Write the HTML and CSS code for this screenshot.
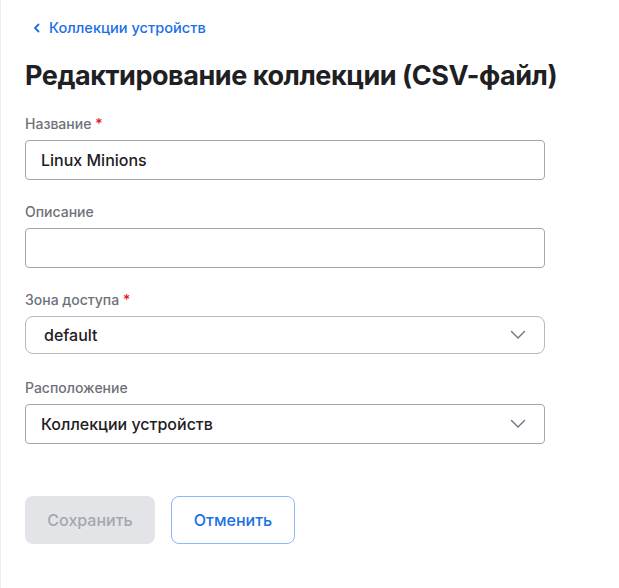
FILE: index.html
```html
<!DOCTYPE html>
<html lang="ru">
<head>
<meta charset="utf-8">
<link rel="stylesheet" href="styles.css">
</head>
<body>
<div class="page">
  <a class="back" href="#">
    <svg class="back-icon" width="8" height="10" viewBox="0 0 8 10"><path d="M5.5 1.5 L2 5 L5.5 8.5" fill="none" stroke="#1a6fe8" stroke-width="1.8" stroke-linecap="round" stroke-linejoin="round"/></svg>
    <span>Коллекции устройств</span>
  </a>
  <h1 class="title">Редактирование коллекции (CSV-файл)</h1>

  <div class="field first">
    <div class="label">Название <span class="req">*</span></div>
    <div class="input">Linux Minions</div>
  </div>
  <div class="field">
    <div class="label">Описание</div>
    <div class="input"></div>
  </div>
  <div class="field">
    <div class="label">Зона доступа <span class="req">*</span></div>
    <div class="input select round">
      <span>default</span>
      <svg class="chev" width="16" height="10" viewBox="0 0 16 10"><path d="M1.5 1.5 L8 8 L14.5 1.5" fill="none" stroke="#6b7280" stroke-width="1.4" stroke-linecap="round" stroke-linejoin="round"/></svg>
    </div>
  </div>
  <div class="field after-round">
    <div class="label">Расположение</div>
    <div class="input select">
      <span>Коллекции устройств</span>
      <svg class="chev" width="16" height="10" viewBox="0 0 16 10"><path d="M1.5 1.5 L8 8 L14.5 1.5" fill="none" stroke="#6b7280" stroke-width="1.4" stroke-linecap="round" stroke-linejoin="round"/></svg>
    </div>
  </div>

  <div class="actions">
    <button class="btn btn-save" disabled>Сохранить</button>
    <button class="btn btn-cancel">Отменить</button>
  </div>
</div>
</body>
</html>
```
FILE: styles.css
```css
html, body {
  margin: 0;
  padding: 0;
  background: #ffffff;
}
body {
  font-family: Inter, "Noto Sans", sans-serif;
  color: #1f2023;
}
.page {
  min-height: 588px;
  box-sizing: border-box;
  border-left: 1px solid #eeeff1;
  padding: 16px 0 0 24px;
}
.back {
  display: flex;
  align-items: center;
  gap: 8px;
  height: 24px;
  padding-left: 8px;
  color: #1a6fe8;
  text-decoration: none;
  font-size: 14.6px;
  font-weight: 500;
}
.back-icon { display: block; }
.title {
  margin: 18px 0 0 0;
  font-size: 27px;
  line-height: 36px;
  font-weight: 700;
  color: #1f2023;
  letter-spacing: -0.45px;
}
.field {
  width: 520px;
  margin-top: 22px;
}
.field.first { margin-top: 20px; }
.field.after-round { margin-top: 24px; }
.label {
  font-size: 14px;
  line-height: 20px;
  color: #6e7178;
  font-weight: 500;
  margin-bottom: 6px;
}
.req { color: #e01b24; }
.input {
  box-sizing: border-box;
  height: 40px;
  border: 1px solid #a3a7b0;
  border-radius: 4px;
  display: flex;
  align-items: center;
  padding: 0 15px;
  font-size: 16px;
  font-weight: 500;
  color: #1f2023;
}
.select { justify-content: space-between; padding-right: 18px; }
.round {
  height: 38px;
  border-radius: 8px;
  border-color: #b4b8c0;
  padding-left: 18px;
}
.chev { display: block; }
.actions {
  display: flex;
  gap: 16px;
  margin-top: 52px;
}
.btn {
  box-sizing: border-box;
  height: 48px;
  border-radius: 8px;
  font-family: inherit;
  font-size: 16px;
  font-weight: 500;
  padding: 0;
}
.btn-save {
  width: 130px;
  background: #e2e4e8;
  border: none;
  color: #a4a7ad;
}
.btn-cancel {
  width: 124px;
  background: #ffffff;
  border: 1px solid #8fb6f7;
  color: #1a6fe8;
}
```
